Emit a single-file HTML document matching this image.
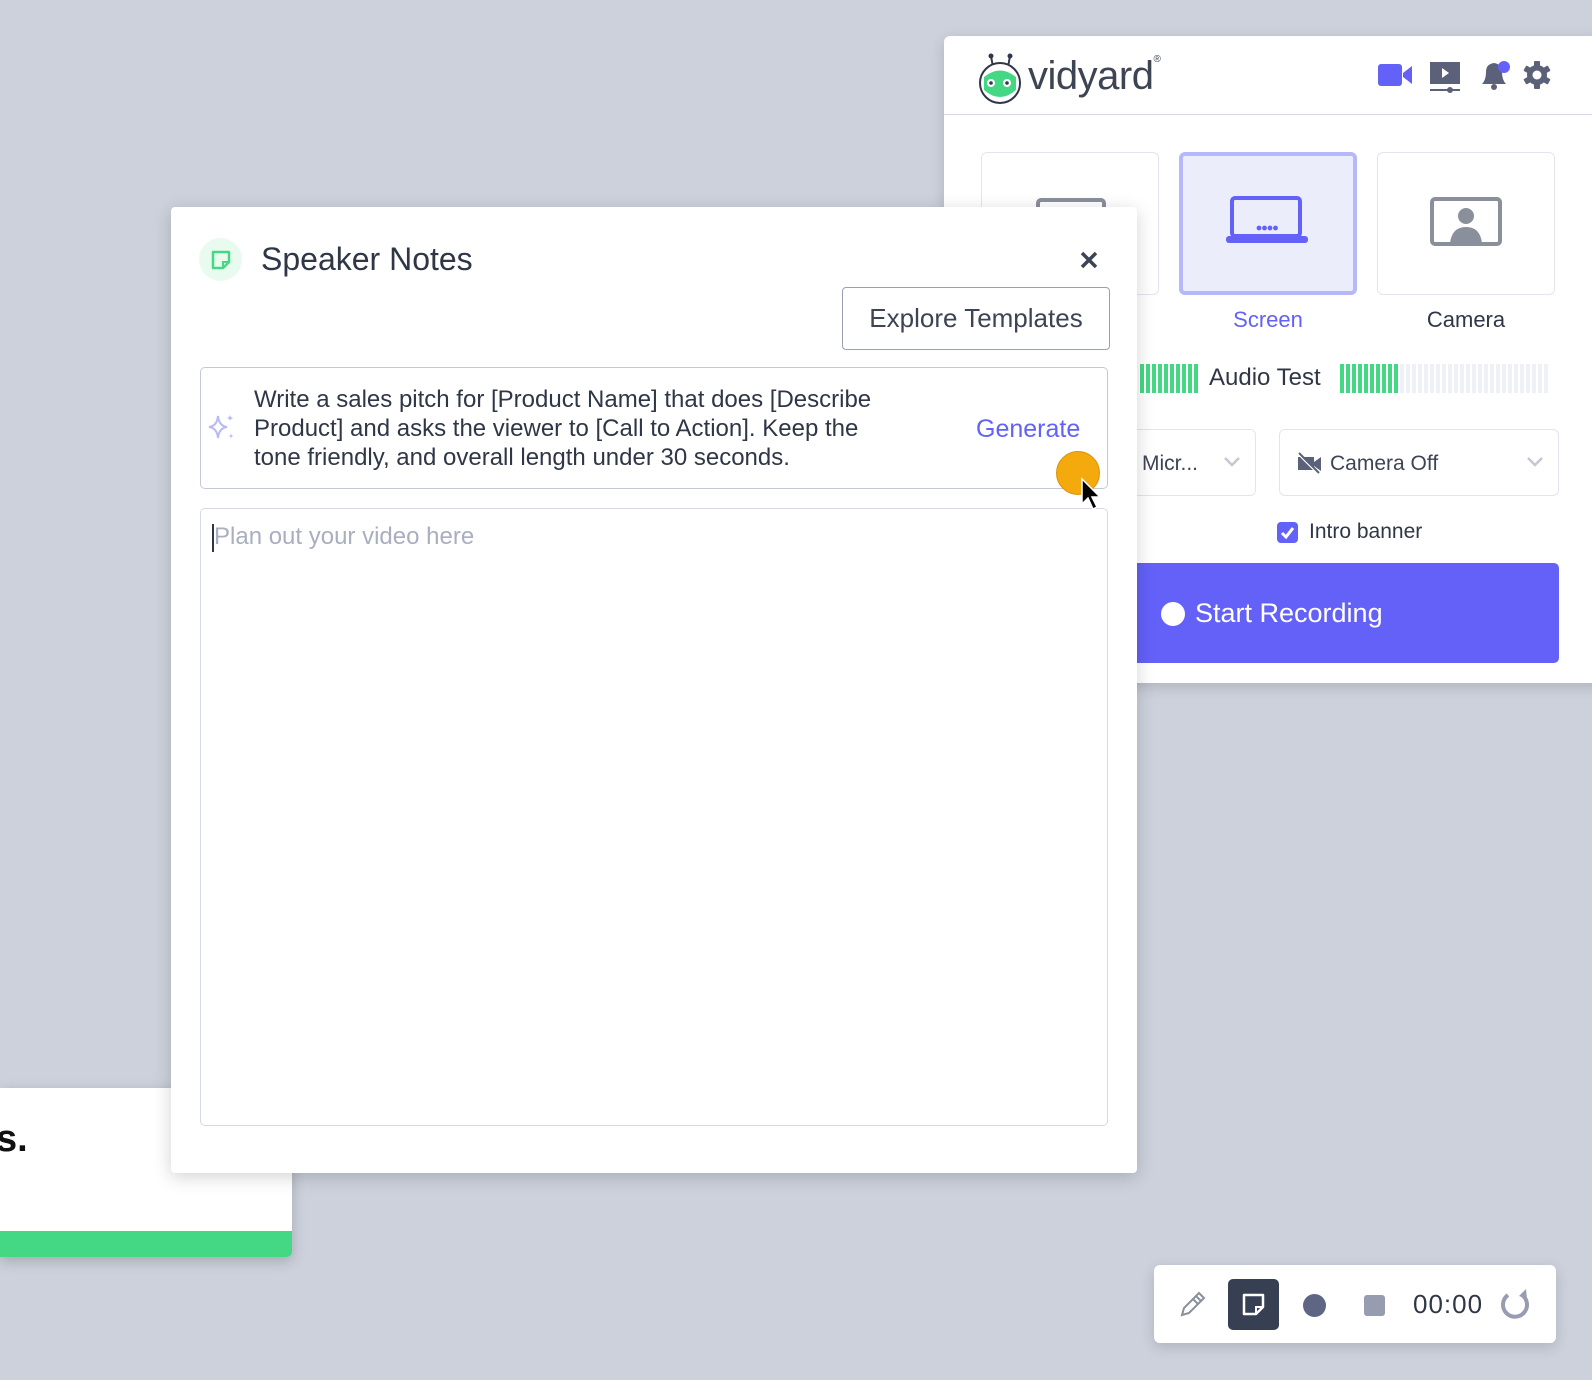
<!DOCTYPE html>
<html><head><meta charset="utf-8"><style>
*{box-sizing:border-box;margin:0;padding:0}
body{width:1592px;height:1380px;background:#cdd1dc;position:relative;overflow:hidden;font-family:"Liberation Sans",sans-serif;color:#2f3747}
.abs{position:absolute}
.panel{left:944px;top:36px;width:660px;height:647px;background:#fff;border-radius:6px;box-shadow:0 4px 14px rgba(0,0,0,.15)}
.tile{position:absolute;top:116px;width:178px;height:143px;border:1px solid #e2e5ee;border-radius:6px;background:#fff}
.lbl{position:absolute;top:271px;font-size:22px;text-align:center;width:178px;color:#2f3747}
.dlg{left:171px;top:207px;width:966px;height:966px;background:#fff;border-radius:4px;box-shadow:0 4px 18px rgba(0,0,0,.18)}
.bar{display:inline-block;width:4px;height:29px;margin-right:2px;background:#44d884}
.bar.o{background:#eef1f6}
</style></head><body>

<div class="abs" style="left:0;top:1088px;width:292px;height:169px;background:#fff;border-radius:0 0 5px 0;box-shadow:0 4px 14px rgba(0,0,0,.2);overflow:hidden">
 <div class="abs" style="left:-4px;top:30px;font-size:38px;font-weight:bold;color:#111">s.</div>
 <div class="abs" style="left:0;top:143px;width:292px;height:26px;background:#44d884"></div>
</div>

<div class="abs panel">
 <svg class="abs" style="left:31px;top:16px" width="52" height="52" viewBox="0 0 52 52">
  <line x1="16" y1="4" x2="18" y2="15" stroke="#2f3747" stroke-width="2"/><line x1="35" y1="4" x2="33" y2="15" stroke="#2f3747" stroke-width="2"/>
  <circle cx="16" cy="4" r="2.5" fill="#2f3747"/><circle cx="35" cy="4" r="2.5" fill="#2f3747"/>
  <circle cx="25" cy="31" r="20" fill="#fff" stroke="#2f3747" stroke-width="2"/>
  <path d="M9 25 Q25 12 41 25 L41 38 Q25 52 9 38Z" fill="#44d884"/>
  <circle cx="16" cy="31" r="4" fill="#fff"/><circle cx="32" cy="31" r="4" fill="#fff"/>
  <circle cx="16" cy="31" r="1.8" fill="#2f3747"/><circle cx="32" cy="31" r="1.8" fill="#2f3747"/>
 </svg>
 <div class="abs" style="left:84px;top:18px;font-size:40px;color:#3d4453;letter-spacing:-.5px">vidyard<span style="font-size:10px;vertical-align:top">®</span></div>
 <svg class="abs" style="left:434px;top:26px" width="36" height="26"><rect x="0" y="2" width="24" height="22" rx="3" fill="#6361f8"/><path d="M25 11 L34 4 V22 L25 15Z" fill="#6361f8"/></svg>
 <svg class="abs" style="left:486px;top:26px" width="32" height="32"><rect x="0" y="0" width="30" height="22" fill="#5b6178"/><path d="M12 6 L19 11 L12 16Z" fill="#fff"/><line x1="0" y1="28" x2="30" y2="28" stroke="#5b6178" stroke-width="2"/><circle cx="20" cy="28" r="3" fill="#5b6178"/></svg>
 <svg class="abs" style="left:534px;top:22px" width="36" height="34"><path d="M4 26 Q8 22 8 14 Q8 6 16 5 Q24 6 24 14 Q24 22 28 26Z" fill="#5b6178"/><circle cx="16" cy="29" r="3" fill="#5b6178"/><circle cx="26" cy="9" r="6" fill="#6361f8"/></svg>
 <svg class="abs" style="left:578px;top:24px" width="30" height="30" viewBox="0 0 30 30"><g fill="#5b6178"><circle cx="15" cy="15" r="10"/><rect x="12" y="1" width="6" height="28" rx="1"/><rect x="12" y="1" width="6" height="28" rx="1" transform="rotate(60 15 15)"/><rect x="12" y="1" width="6" height="28" rx="1" transform="rotate(120 15 15)"/></g><circle cx="15" cy="15" r="4.5" fill="#fff"/></svg>
 <div class="abs" style="left:0;top:78px;width:660px;height:1px;background:#d6dae6"></div>

 <div class="tile" style="left:37px"></div>
 <svg class="abs" style="left:92px;top:162px" width="72" height="20"><rect x="2" y="2" width="66" height="30" rx="3" fill="none" stroke="#8a8f9c" stroke-width="4"/></svg>
 <div class="tile" style="left:235px;background:#ecedfb;border:4px solid #b6b8fb"></div>
 <svg class="abs" style="left:281px;top:160px" width="84" height="50"><rect x="7" y="2" width="68" height="38" rx="3" fill="none" stroke="#6361f8" stroke-width="4"/><rect x="1" y="40" width="82" height="7" rx="3" fill="#6361f8"/><g fill="#6361f8"><circle cx="34" cy="32" r="2.4"/><circle cx="39.5" cy="32" r="2.4"/><circle cx="45" cy="32" r="2.4"/><circle cx="50.5" cy="32" r="2.4"/></g></svg>
 <div class="tile" style="left:433px"></div>
 <svg class="abs" style="left:486px;top:161px" width="72" height="50"><rect x="2" y="2" width="68" height="45" rx="3" fill="none" stroke="#8a8f9c" stroke-width="4"/><circle cx="36" cy="19" r="8" fill="#8a8f9c"/><path d="M20 46 Q22 30 36 30 Q50 30 52 46Z" fill="#8a8f9c"/></svg>
 <div class="lbl" style="left:235px;color:#6361f8">Screen</div>
 <div class="lbl" style="left:433px">Camera</div>

 <div class="abs" style="left:196px;top:328px;white-space:nowrap">
  <span class="bar"></span><span class="bar"></span><span class="bar"></span><span class="bar"></span><span class="bar"></span><span class="bar"></span><span class="bar"></span><span class="bar"></span><span class="bar"></span><span class="bar"></span>
 </div>
 <div class="abs" style="left:265px;top:328px;font-size:24px;color:#2f3747">Audio Test</div>
 <div class="abs" style="left:396px;top:328px;white-space:nowrap">
  <span class="bar"></span><span class="bar"></span><span class="bar"></span><span class="bar"></span><span class="bar"></span><span class="bar"></span><span class="bar"></span><span class="bar"></span><span class="bar"></span><span class="bar"></span><span class="bar o"></span><span class="bar o"></span><span class="bar o"></span><span class="bar o"></span><span class="bar o"></span><span class="bar o"></span><span class="bar o"></span><span class="bar o"></span><span class="bar o"></span><span class="bar o"></span><span class="bar o"></span><span class="bar o"></span><span class="bar o"></span><span class="bar o"></span><span class="bar o"></span><span class="bar o"></span><span class="bar o"></span><span class="bar o"></span><span class="bar o"></span><span class="bar o"></span><span class="bar o"></span><span class="bar o"></span><span class="bar o"></span><span class="bar o"></span><span class="bar o"></span>
 </div>

 <div class="abs" style="left:150px;top:393px;width:162px;height:67px;border:1px solid #e2e5ee;border-radius:6px"></div>
 <div class="abs" style="left:198px;top:416px;font-size:21px;color:#3d4453">Micr...</div>
 <svg class="abs" style="left:279px;top:420px" width="18" height="12"><path d="M2 2 L9 9 L16 2" fill="none" stroke="#c4c8d2" stroke-width="2.5"/></svg>
 <div class="abs" style="left:335px;top:393px;width:280px;height:67px;border:1px solid #e2e5ee;border-radius:6px"></div>
 <svg class="abs" style="left:353px;top:416px" width="26" height="22"><rect x="1" y="5" width="16" height="13" fill="#5b6178"/><path d="M17 10 L24 5 V19 L17 14Z" fill="#5b6178"/><line x1="2" y1="2" x2="22" y2="22" stroke="#fff" stroke-width="3"/><line x1="2" y1="1" x2="22" y2="21" stroke="#5b6178" stroke-width="2"/></svg>
 <div class="abs" style="left:386px;top:416px;font-size:21px;color:#3d4453">Camera Off</div>
 <svg class="abs" style="left:582px;top:420px" width="18" height="12"><path d="M2 2 L9 9 L16 2" fill="none" stroke="#c4c8d2" stroke-width="2.5"/></svg>

 <div class="abs" style="left:178px;top:484px;font-size:21px">a</div>
 <div class="abs" style="left:333px;top:486px;width:21px;height:21px;background:#6361f8;border-radius:4px"></div>
 <svg class="abs" style="left:333px;top:486px" width="21" height="21"><path d="M5 11 L9 15 L16 6" fill="none" stroke="#fff" stroke-width="3"/></svg>
 <div class="abs" style="left:365px;top:484px;font-size:21px;color:#2f3747">Intro banner</div>

 <div class="abs" style="left:150px;top:527px;width:465px;height:100px;background:#6361f8;border-radius:5px"></div>
 <div class="abs" style="left:217px;top:566px;width:24px;height:24px;border-radius:50%;background:#fff"></div>
 <div class="abs" style="left:251px;top:562px;font-size:27px;color:#fff">Start Recording</div>
</div>

<div class="abs dlg">
 <div class="abs" style="left:28px;top:31px;width:43px;height:43px;border-radius:50%;background:#e9fbef"></div>
 <svg class="abs" style="left:40px;top:43px" width="20" height="20"><path d="M2 2 H18 V12 L12 18 H2Z" fill="none" stroke="#44d884" stroke-width="2.5" stroke-linejoin="round"/><path d="M12 18 V12 H18" fill="none" stroke="#44d884" stroke-width="2"/></svg>
 <div class="abs" style="left:90px;top:34px;font-size:32px;color:#2f3747">Speaker Notes</div>
 <svg class="abs" style="left:908px;top:43px" width="20" height="20"><path d="M3 3 L17 17 M17 3 L3 17" stroke="#3d4453" stroke-width="3.5"/></svg>
 <div class="abs" style="left:671px;top:80px;width:268px;height:63px;border:1px solid #9aa0b0;border-radius:4px;font-size:26px;color:#3d4453;text-align:center;line-height:61px">Explore Templates</div>
 <div class="abs" style="left:29px;top:160px;width:908px;height:122px;border:1px solid #c4c8d8;border-radius:5px"></div>
 <svg class="abs" style="left:36px;top:205px" width="30" height="30"><path d="M11 4 Q12 14 20 15 Q12 16 11 26 Q10 16 2 15 Q10 14 11 4Z" fill="none" stroke="#b8baf5" stroke-width="2"/><path d="M23 2 Q23 6 27 6 Q23 6 23 10 Q23 6 19 6 Q23 6 23 2Z" fill="#b8baf5"/><path d="M24 21 Q24 24 27 24 Q24 24 24 27 Q24 24 21 24 Q24 24 24 21Z" fill="#b8baf5"/></svg>
 <div class="abs" style="left:83px;top:178px;width:640px;font-size:24px;line-height:29px;color:#2f3747">Write a sales pitch for [Product Name] that does [Describe Product] and asks the viewer to [Call to Action]. Keep the tone friendly, and overall length under 30 seconds.</div>
 <div class="abs" style="left:805px;top:208px;font-size:25px;color:#6361f8">Generate</div>
 <div class="abs" style="left:29px;top:301px;width:908px;height:618px;border:1px solid #d6dae6;border-radius:5px"></div>
 <div class="abs" style="left:41px;top:317px;width:2px;height:28px;background:#2f3747"></div>
 <div class="abs" style="left:43px;top:316px;font-size:24px;color:#a9aec0">Plan out your video here</div>
 <div class="abs" style="left:885px;top:244px;width:44px;height:44px;border-radius:50%;background:#f4a90d;border:1px solid #d89407"></div>
 <svg class="abs" style="left:908px;top:270px" width="26" height="38"><path d="M3 2 L3 27 L9 21 L14 32 L18 30 L13 20 L21 20Z" fill="#000" stroke="#fff" stroke-width="1.5"/></svg>
</div>

<div class="abs" style="left:1154px;top:1265px;width:402px;height:78px;background:#fff;border-radius:6px;box-shadow:0 4px 14px rgba(0,0,0,.15)">
 <svg class="abs" style="left:24px;top:26px" width="28" height="28"><path d="M4 24 L6 17 L18 5 L23 10 L11 22Z M15 8 L20 13 M18 5 L21 2 L26 7 L23 10" fill="none" stroke="#8a8f9c" stroke-width="2"/></svg>
 <div class="abs" style="left:74px;top:14px;width:51px;height:51px;border-radius:5px;background:#373f52"></div>
 <svg class="abs" style="left:88px;top:28px" width="24" height="24"><path d="M2 2 H21 V14 L14 21 H2Z" fill="none" stroke="#fff" stroke-width="2.5" stroke-linejoin="round"/><path d="M14 21 V14 H21" fill="none" stroke="#fff" stroke-width="2"/></svg>
 <div class="abs" style="left:149px;top:29px;width:23px;height:23px;border-radius:50%;background:#5e6683"></div>
 <div class="abs" style="left:210px;top:30px;width:21px;height:21px;border-radius:3px;background:#989cb0"></div>
 <div class="abs" style="left:259px;top:24px;font-size:26px;color:#2f3747;letter-spacing:1px">00:00</div>
 <svg class="abs" style="left:344px;top:22px" width="34" height="34"><path d="M10 8 A12 12 0 1 0 24 8" fill="none" stroke="#989cb0" stroke-width="4"/><path d="M28 2 L21 9 L29 12Z" fill="#989cb0"/></svg>
</div>
</body></html>
